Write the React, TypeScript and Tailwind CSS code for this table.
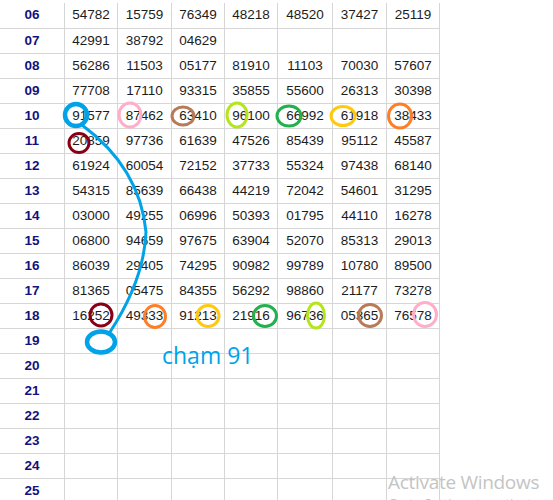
const rows: [string, string[]][] = [
  ["06", ["54782", "15759", "76349", "48218", "48520", "37427", "25119"]],
  ["07", ["42991", "38792", "04629", "", "", "", ""]],
  ["08", ["56286", "11503", "05177", "81910", "11103", "70030", "57607"]],
  ["09", ["77708", "17110", "93315", "35855", "55600", "26313", "30398"]],
  ["10", ["91577", "87462", "63410", "96100", "66992", "61918", "38433"]],
  ["11", ["20859", "97736", "61639", "47526", "85439", "95112", "45587"]],
  ["12", ["61924", "60054", "72152", "37733", "55324", "97438", "68140"]],
  ["13", ["54315", "85639", "66438", "44219", "72042", "54601", "31295"]],
  ["14", ["03000", "49255", "06996", "50393", "01795", "44110", "16278"]],
  ["15", ["06800", "94659", "97675", "63904", "52070", "85313", "29013"]],
  ["16", ["86039", "29405", "74295", "90982", "99789", "10780", "89500"]],
  ["17", ["81365", "05475", "84355", "56292", "98860", "21177", "73278"]],
  ["18", ["16252", "49333", "91213", "21916", "96736", "05365", "76578"]],
  ["19", ["", "", "", "", "", "", ""]],
  ["20", ["", "", "", "", "", "", ""]],
  ["21", ["", "", "", "", "", "", ""]],
  ["22", ["", "", "", "", "", "", ""]],
  ["23", ["", "", "", "", "", "", ""]],
  ["24", ["", "", "", "", "", "", ""]],
  ["25", ["", "", "", "", "", "", ""]],
];

// marks drawn over the sheet: [cx, cy, rx, ry, colour]
const marks: [number, number, number, number, string][] = [
  [76, 115, 11, 11, "#00a2e8"],
  [130, 115, 11, 12, "#ffaec9"],
  [183, 116, 11, 9, "#b97a57"],
  [237, 115, 10, 12, "#b5e61d"],
  [289, 116, 12, 10, "#22b14c"],
  [343, 116, 12, 9.5, "#ffc90e"],
  [400, 116, 11.5, 12, "#ff7f27"],
  [79, 143, 10, 9.5, "#880015"],
  [101, 315, 11, 11, "#880015"],
  [155, 316.5, 10.5, 11, "#ff7f27"],
  [208, 316, 11, 10.5, "#ffc90e"],
  [265, 316, 11.5, 10.5, "#22b14c"],
  [316, 315.5, 8.5, 12.5, "#b5e61d"],
  [370, 315.5, 11.5, 11, "#b97a57"],
  [425, 314.5, 11.5, 12, "#ffaec9"],
];

const colW = ["w-[65px]", "w-[53px]", "w-[54px]", "w-[53px]", "w-[53px]", "w-[55px]", "w-[54px]", "w-[53px]"];

export default function App() {
  return (
    <div className="relative w-[553px] h-[500px] overflow-hidden bg-white font-['Liberation_Sans',Arial,sans-serif]">
      <div className="flex flex-col">
        {rows.map(([label, cells], i) => (
          <div key={label} className={`flex ${i === 0 ? "h-[29px] pt-[3px]" : "h-[25px]"}`}>
            <div className={`${colW[0]} shrink-0 flex items-center justify-center border-r border-b border-[#d6d6d6] text-[13.5px] font-bold text-[#12127e]`}>
              {label}
            </div>
            {cells.map((v, j) => (
              <div
                key={j}
                className={`${colW[j + 1]} shrink-0 flex items-center justify-center border-r border-b border-[#d6d6d6] text-[13.5px] text-[#1c1c1c]`}
              >
                {v}
              </div>
            ))}
          </div>
        ))}
      </div>

      <svg className="absolute inset-0" width="553" height="500" viewBox="0 0 553 500" fill="none">
        {marks.map(([cx, cy, rx, ry, c], i) => (
          <ellipse key={i} cx={cx} cy={cy} rx={rx} ry={ry} stroke={c} strokeWidth={i === 0 ? 4.5 : 3} />
        ))}
        <path d="M82 125 Q140 168 146 232 Q144 280 110 332" stroke="#00a2e8" strokeWidth="3" strokeLinecap="round" />
        <ellipse cx="101" cy="342" rx="14" ry="10.5" stroke="#00a2e8" strokeWidth="4.5" />
      </svg>

      <div className="absolute left-[162px] top-[344px] font-['Open_Sans',sans-serif] text-[23px] leading-none text-[#00a2e8]">
        chạm 91
      </div>

      <div className="absolute left-[388px] top-[470px] font-['Open_Sans',sans-serif] text-[#c4c4c4]">
        <div className="text-[19px] leading-[24px] tracking-[-0.3px]">Activate Windows</div>
        <div className="text-[13px] leading-[18px]">Go to Settings to activate Windows.</div>
      </div>
    </div>
  );
}
